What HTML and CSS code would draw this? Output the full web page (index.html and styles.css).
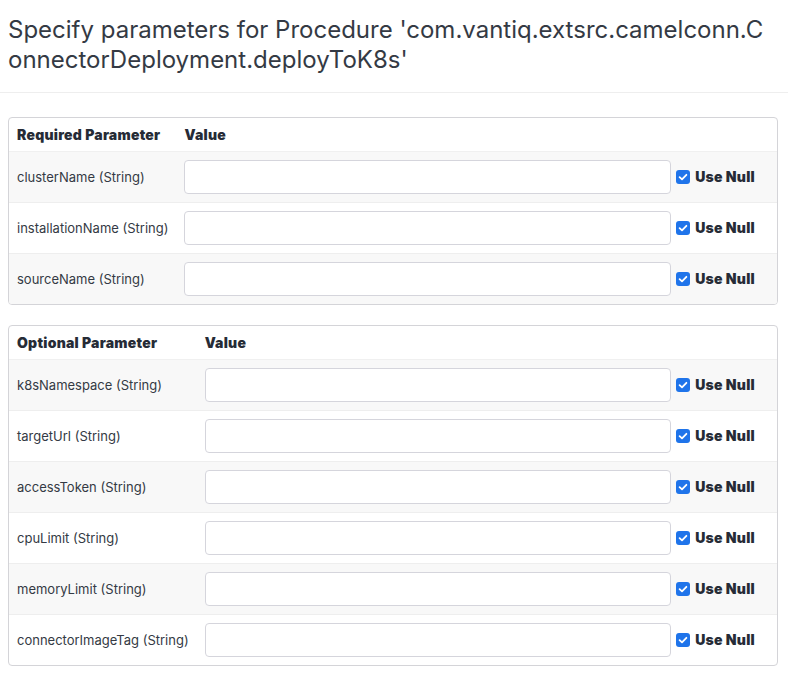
FILE: index.html
```html
<!DOCTYPE html>
<html>
<head>
<meta charset="utf-8">
<link rel="stylesheet" href="styles.css">
</head>
<body>
<div class="header">
  <h1 class="title">Specify parameters for Procedure 'com.vantiq.extsrc.camelconn.ConnectorDeployment.deployToK8s'</h1>
</div>
<div class="content">
  <div class="panel">
    <table class="params">
      <thead>
        <tr><th class="col-name">Required Parameter</th><th class="col-value">Value</th><th class="col-null"></th></tr>
      </thead>
      <tbody>
        <tr><td class="col-name">clusterName (String)</td><td class="col-value"><input class="text-input" type="text"></td><td class="col-null"><label class="nullbox"><span class="check"><svg viewBox="0 0 14 14" width="14" height="14"><path d="M3.6 7.2 L6 9.4 L10.4 4.8" fill="none" stroke="#fff" stroke-width="1.8" stroke-linecap="round" stroke-linejoin="round"/></svg></span>Use Null</label></td></tr>
        <tr><td class="col-name">installationName (String)</td><td class="col-value"><input class="text-input" type="text"></td><td class="col-null"><label class="nullbox"><span class="check"><svg viewBox="0 0 14 14" width="14" height="14"><path d="M3.6 7.2 L6 9.4 L10.4 4.8" fill="none" stroke="#fff" stroke-width="1.8" stroke-linecap="round" stroke-linejoin="round"/></svg></span>Use Null</label></td></tr>
        <tr><td class="col-name">sourceName (String)</td><td class="col-value"><input class="text-input" type="text"></td><td class="col-null"><label class="nullbox"><span class="check"><svg viewBox="0 0 14 14" width="14" height="14"><path d="M3.6 7.2 L6 9.4 L10.4 4.8" fill="none" stroke="#fff" stroke-width="1.8" stroke-linecap="round" stroke-linejoin="round"/></svg></span>Use Null</label></td></tr>
      </tbody>
    </table>
  </div>
  <div class="panel">
    <table class="params">
      <thead>
        <tr><th class="col-name">Optional Parameter</th><th class="col-value">Value</th><th class="col-null"></th></tr>
      </thead>
      <tbody>
        <tr><td class="col-name">k8sNamespace (String)</td><td class="col-value"><input class="text-input" type="text"></td><td class="col-null"><label class="nullbox"><span class="check"><svg viewBox="0 0 14 14" width="14" height="14"><path d="M3.6 7.2 L6 9.4 L10.4 4.8" fill="none" stroke="#fff" stroke-width="1.8" stroke-linecap="round" stroke-linejoin="round"/></svg></span>Use Null</label></td></tr>
        <tr><td class="col-name">targetUrl (String)</td><td class="col-value"><input class="text-input" type="text"></td><td class="col-null"><label class="nullbox"><span class="check"><svg viewBox="0 0 14 14" width="14" height="14"><path d="M3.6 7.2 L6 9.4 L10.4 4.8" fill="none" stroke="#fff" stroke-width="1.8" stroke-linecap="round" stroke-linejoin="round"/></svg></span>Use Null</label></td></tr>
        <tr><td class="col-name">accessToken (String)</td><td class="col-value"><input class="text-input" type="text"></td><td class="col-null"><label class="nullbox"><span class="check"><svg viewBox="0 0 14 14" width="14" height="14"><path d="M3.6 7.2 L6 9.4 L10.4 4.8" fill="none" stroke="#fff" stroke-width="1.8" stroke-linecap="round" stroke-linejoin="round"/></svg></span>Use Null</label></td></tr>
        <tr><td class="col-name">cpuLimit (String)</td><td class="col-value"><input class="text-input" type="text"></td><td class="col-null"><label class="nullbox"><span class="check"><svg viewBox="0 0 14 14" width="14" height="14"><path d="M3.6 7.2 L6 9.4 L10.4 4.8" fill="none" stroke="#fff" stroke-width="1.8" stroke-linecap="round" stroke-linejoin="round"/></svg></span>Use Null</label></td></tr>
        <tr><td class="col-name">memoryLimit (String)</td><td class="col-value"><input class="text-input" type="text"></td><td class="col-null"><label class="nullbox"><span class="check"><svg viewBox="0 0 14 14" width="14" height="14"><path d="M3.6 7.2 L6 9.4 L10.4 4.8" fill="none" stroke="#fff" stroke-width="1.8" stroke-linecap="round" stroke-linejoin="round"/></svg></span>Use Null</label></td></tr>
        <tr><td class="col-name">connectorImageTag (String)</td><td class="col-value"><input class="text-input" type="text"></td><td class="col-null"><label class="nullbox"><span class="check"><svg viewBox="0 0 14 14" width="14" height="14"><path d="M3.6 7.2 L6 9.4 L10.4 4.8" fill="none" stroke="#fff" stroke-width="1.8" stroke-linecap="round" stroke-linejoin="round"/></svg></span>Use Null</label></td></tr>
      </tbody>
    </table>
  </div>
</div>
</body>
</html>
```
FILE: styles.css
```css
* { box-sizing: border-box; }
html, body { margin: 0; padding: 0; background: #fff; }
body {
  font-family: Inter, "Noto Sans", "Liberation Sans", sans-serif;
  color: #333;
}
.header {
  padding: 15px 22px 17px 8px;
  border-bottom: 1px solid #eeeeee;
}
.title {
  margin: 0;
  font-size: 24px;
  line-height: 30px;
  font-weight: 400;
  color: #343a44;
  word-break: break-all;
}
.content {
  padding: 24px 10px 0 8px;
}
.panel {
  border: 1px solid #d4d4d8;
  border-radius: 4px;
  overflow: hidden;
  margin-bottom: 20px;
}
.params {
  width: 100%;
  border-collapse: collapse;
}
.params th {
  text-align: left;
  font-weight: 900;
  font-size: 14px;
  letter-spacing: 0.25px;
  color: #262b36;
  height: 33px;
  padding: 0 8px;
  vertical-align: middle;
}
.params td {
  height: 51px;
  font-size: 13px;
  color: #343a44;
  border-top: 1px solid #eeeeee;
  vertical-align: middle;
}
.params tbody tr:nth-child(odd) td { background: #f8f8f8; }
.params tbody tr:first-child td { border-top: 1px solid #f0f0f0; }
.col-name {
  width: 1%;
  white-space: nowrap;
  padding: 0 8px;
}
td.col-value, th.col-value { padding: 0 0 0 8px; }
td.col-null, th.col-null {
  width: 1%;
  white-space: nowrap;
  padding: 0 22px 0 5px;
}
.text-input {
  display: block;
  width: 100%;
  height: 34px;
  border: 1px solid #d5d5dc;
  border-radius: 4px;
  background: #fff;
  margin: 0;
  padding: 0 8px;
  font-family: inherit;
}
.nullbox {
  display: flex;
  align-items: center;
  gap: 5px;
  font-weight: 900;
  font-size: 14px;
  letter-spacing: 0.25px;
  color: #262b36;
}
.check {
  display: block;
  width: 14px;
  height: 14px;
  background: #1f74ea;
  border-radius: 3px;
}
.check svg { display: block; }
```
